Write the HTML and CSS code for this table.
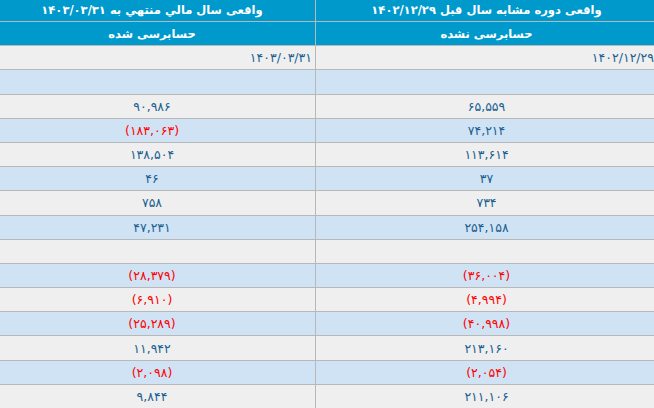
FILE: index.html
```html
<!DOCTYPE html>
<html lang="fa">
<head>
<meta charset="utf-8">
<link rel="stylesheet" href="styles.css">
</head>
<body>
<div class="viewport">
<div class="table" dir="rtl">
  <div class="row head first">
    <div class="cell c1">واقعی دوره مشابه سال قبل ۱۴۰۲/۱۲/۲۹</div>
    <div class="cell c2">واقعی سال مالي منتهي به ۱۴۰۳/۰۳/۳۱</div>
  </div>
  <div class="row head">
    <div class="cell c1">حسابرسی نشده</div>
    <div class="cell c2">حسابرسی شده</div>
  </div>
  <div class="row gray date">
    <div class="cell c1">۱۴۰۲/۱۲/۲۹</div>
    <div class="cell c2">۱۴۰۳/۰۳/۳۱</div>
  </div>
  <div class="row blue">
    <div class="cell c1"></div>
    <div class="cell c2"></div>
  </div>
  <div class="row gray">
    <div class="cell c1">۶۵,۵۵۹</div>
    <div class="cell c2">۹۰,۹۸۶</div>
  </div>
  <div class="row blue">
    <div class="cell c1">۷۴,۲۱۴</div>
    <div class="cell c2 neg">(۱۸۳,۰۶۳)</div>
  </div>
  <div class="row gray">
    <div class="cell c1">۱۱۳,۶۱۴</div>
    <div class="cell c2">۱۳۸,۵۰۴</div>
  </div>
  <div class="row blue">
    <div class="cell c1">۳۷</div>
    <div class="cell c2">۴۶</div>
  </div>
  <div class="row gray">
    <div class="cell c1">۷۳۴</div>
    <div class="cell c2">۷۵۸</div>
  </div>
  <div class="row blue">
    <div class="cell c1">۲۵۴,۱۵۸</div>
    <div class="cell c2">۴۷,۲۳۱</div>
  </div>
  <div class="row gray">
    <div class="cell c1"></div>
    <div class="cell c2"></div>
  </div>
  <div class="row blue">
    <div class="cell c1 neg">(۳۶,۰۰۴)</div>
    <div class="cell c2 neg">(۲۸,۳۷۹)</div>
  </div>
  <div class="row gray">
    <div class="cell c1 neg">(۴,۹۹۴)</div>
    <div class="cell c2 neg">(۶,۹۱۰)</div>
  </div>
  <div class="row blue">
    <div class="cell c1 neg">(۴۰,۹۹۸)</div>
    <div class="cell c2 neg">(۲۵,۲۸۹)</div>
  </div>
  <div class="row gray">
    <div class="cell c1">۲۱۳,۱۶۰</div>
    <div class="cell c2">۱۱,۹۴۲</div>
  </div>
  <div class="row blue">
    <div class="cell c1 neg">(۲,۰۵۴)</div>
    <div class="cell c2 neg">(۲,۰۹۸)</div>
  </div>
  <div class="row gray">
    <div class="cell c1">۲۱۱,۱۰۶</div>
    <div class="cell c2">۹,۸۴۴</div>
  </div>
</div>
</div>
</body>
</html>
```
FILE: styles.css
```css
html, body {
  margin: 0;
  padding: 0;
  background: #ffffff;
}
.viewport {
  width: 654px;
  height: 408px;
  overflow: hidden;
}
.table {
  width: 668px;
  margin-left: -11px;
  margin-top: -2px;
  font-family: "DejaVu Sans", "Noto Sans", sans-serif;
  font-size: 12.5px;
  color: #1a5f90;
}
.row {
  display: flex;
  height: 24.2px;
  box-sizing: border-box;
  border-bottom: 1px solid #b8b8b8;
}
.row.first {
  height: 24px;
}
.cell {
  display: flex;
  align-items: center;
  justify-content: center;
  box-sizing: border-box;
  white-space: nowrap;
}
.c1 {
  width: 341px;
}
.c2 {
  width: 327px;
  border-right: 1px solid #b8b8b8;
}
.head {
  background: #0099cc;
  color: #ffffff;
  font-weight: bold;
  font-size: 11.5px;
}
.gray {
  background: #efefef;
}
.blue {
  background: #d0e3f4;
}
.date .cell {
  justify-content: flex-start;
  padding-right: 3px;
}
.neg {
  color: #ff0000;
}
```
